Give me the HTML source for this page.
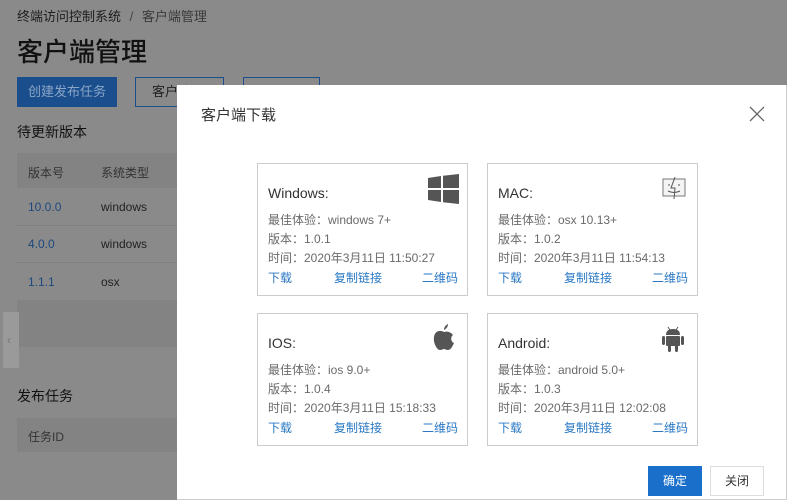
<!DOCTYPE html>
<html><head><meta charset="utf-8"><style>
*{margin:0;padding:0;box-sizing:border-box}
body{width:787px;height:500px;overflow:hidden;background:#8a8a8a;font-family:"Liberation Sans","Noto Sans CJK SC",sans-serif;position:relative;color:#111}
.a{position:absolute;white-space:nowrap}
.modal{position:absolute;left:177px;top:85px;width:610px;height:415px;background:#fff;border-right:1px solid #ccc;border-bottom:1px solid #ccc}
.card{position:absolute;width:211px;height:133px;border:1px solid #ccc;background:#fff;font-size:12px;color:#6a6a6a}
.card .t{position:absolute;left:10px;top:21px;font-size:14px;color:#333}
.card .l{position:absolute;left:10px}
.card .k{position:absolute;top:105px;color:#2a78c4}
.card svg{position:absolute}
</style></head><body>
<div class="a" style="left:17px;top:6px;font-size:13px;color:#1e1e1e">终端访问控制系统 <span style="color:#444;margin:0 5px">/</span> <span style="color:#3a3a3a">客户端管理</span></div>
<div class="a" style="left:17px;top:32px;font-size:26px;color:#111;font-weight:500">客户端管理</div>
<div class="a" style="left:17px;top:77px;width:100px;height:30px;background:#1a4e8c;color:#8aa6c8;font-size:13px;line-height:30px;text-align:center">创建发布任务</div>
<div class="a" style="left:135px;top:77px;width:89px;height:30px;border:1px solid #1a4e8c;color:#222;font-size:13px;line-height:28px;padding-left:16px">客户端</div>
<div class="a" style="left:243px;top:77px;width:77px;height:30px;border:1px solid #1a4e8c"></div>
<div class="a" style="left:17px;top:122px;font-size:14px;color:#111">待更新版本</div>
<div class="a" style="left:17px;top:153px;width:160px;height:35px;background:#838383"></div>
<div class="a" style="left:28px;top:164px;font-size:12px;color:#333">版本号</div>
<div class="a" style="left:101px;top:164px;font-size:12px;color:#333">系统类型</div>
<div class="a" style="left:17px;top:225px;width:160px;height:1px;background:#7f7f7f"></div>
<div class="a" style="left:17px;top:262px;width:160px;height:1px;background:#7f7f7f"></div>
<div class="a" style="left:28px;top:200px;font-size:12px;color:#1d4a7e">10.0.0</div>
<div class="a" style="left:101px;top:200px;font-size:12px;color:#222">windows</div>
<div class="a" style="left:28px;top:237px;font-size:12px;color:#1d4a7e">4.0.0</div>
<div class="a" style="left:101px;top:237px;font-size:12px;color:#222">windows</div>
<div class="a" style="left:28px;top:275px;font-size:12px;color:#1d4a7e">1.1.1</div>
<div class="a" style="left:101px;top:275px;font-size:12px;color:#222">osx</div>
<div class="a" style="left:17px;top:300px;width:160px;height:47px;background:#838383"></div>
<div class="a" style="left:3px;top:312px;width:16px;height:56px;background:#9a9a9a;color:#777;font-size:12px;line-height:56px;padding-left:4px">‹</div>
<div class="a" style="left:17px;top:386px;font-size:14px;color:#111">发布任务</div>
<div class="a" style="left:17px;top:418px;width:160px;height:34px;background:#838383"></div>
<div class="a" style="left:28px;top:428px;font-size:12px;color:#333">任务ID</div>

<div class="modal">
<div class="a" style="left:24px;top:19px;font-size:15px;color:#333">客户端下载</div>
<svg class="a" style="left:571px;top:20px" width="18" height="18" viewBox="0 0 18 18"><path d="M2 2L16 16M16 2L2 16" stroke="#666" stroke-width="1.3"/></svg>

<div class="card" style="left:80px;top:78px">
<div class="t">Windows:</div>
<svg style="left:170px;top:10px" width="31" height="30" viewBox="0 0 31 30"><path d="M0 4L13 2V14H0ZM15 1.7L31 0V14H15ZM0 16H13V28L0 26ZM15 16H31V30L15 28.3Z" fill="#555"/></svg>
<div class="l" style="top:47px">最佳体验：windows 7+</div>
<div class="l" style="top:66px">版本：1.0.1</div>
<div class="l" style="top:85px">时间：2020年3月11日 11:50:27</div>
<div class="k" style="left:10px">下载</div><div class="k" style="left:76px">复制链接</div><div class="k" style="left:164px">二维码</div>
</div>

<div class="card" style="left:310px;top:78px">
<div class="t">MAC:</div>
<svg style="left:174px;top:13px" width="24" height="22" viewBox="0 0 24 22"><rect x="1" y="2" width="22" height="17" fill="#f4f4f4" stroke="#777"/><path d="M13 0L9 11H13L12 22M7 7V9M17 7V9M6 14Q12 17 18 14" stroke="#555" fill="none"/></svg>
<div class="l" style="top:47px">最佳体验：osx 10.13+</div>
<div class="l" style="top:66px">版本：1.0.2</div>
<div class="l" style="top:85px">时间：2020年3月11日 11:54:13</div>
<div class="k" style="left:10px">下载</div><div class="k" style="left:76px">复制链接</div><div class="k" style="left:164px">二维码</div>
</div>

<div class="card" style="left:80px;top:228px">
<div class="t">IOS:</div>
<svg style="left:174px;top:10px" width="24" height="28" viewBox="0 0 24 28"><path d="M12 8C9 6 3 6 2 13C1 19 5 26 8 26C10 26 11 25 12 25C13 25 14 26 16 26C19 26 21 21 22 19C19 18 18 13 21 11C19 8 15 7 12 8Z M12 6C12 3 14 1 16 0C16 3 14 5 12 6Z" fill="#555"/></svg>
<div class="l" style="top:47px">最佳体验：ios 9.0+</div>
<div class="l" style="top:66px">版本：1.0.4</div>
<div class="l" style="top:85px">时间：2020年3月11日 15:18:33</div>
<div class="k" style="left:10px">下载</div><div class="k" style="left:76px">复制链接</div><div class="k" style="left:164px">二维码</div>
</div>

<div class="card" style="left:310px;top:228px">
<div class="t">Android:</div>
<svg style="left:174px;top:12px" width="22" height="26" viewBox="0 0 22 26"><path d="M4 9Q4 3 11 3Q18 3 18 9Z" fill="#555"/><rect x="4" y="10" width="14" height="10" rx="1" fill="#555"/><rect x="0" y="10" width="3" height="9" rx="1.5" fill="#555"/><rect x="19" y="10" width="3" height="9" rx="1.5" fill="#555"/><rect x="6" y="19" width="3" height="7" rx="1.5" fill="#555"/><rect x="13" y="19" width="3" height="7" rx="1.5" fill="#555"/><path d="M6 1L8 4M16 1L14 4" stroke="#555"/></svg>
<div class="l" style="top:47px">最佳体验：android 5.0+</div>
<div class="l" style="top:66px">版本：1.0.3</div>
<div class="l" style="top:85px">时间：2020年3月11日 12:02:08</div>
<div class="k" style="left:10px">下载</div><div class="k" style="left:76px">复制链接</div><div class="k" style="left:164px">二维码</div>
</div>

<div class="a" style="left:471px;top:381px;width:54px;height:30px;background:#1a6fca;color:#fff;font-size:12px;line-height:30px;text-align:center">确定</div>
<div class="a" style="left:533px;top:381px;width:54px;height:30px;border:1px solid #ddd;color:#333;font-size:12px;line-height:28px;text-align:center">关闭</div>
</div>
</body></html>
